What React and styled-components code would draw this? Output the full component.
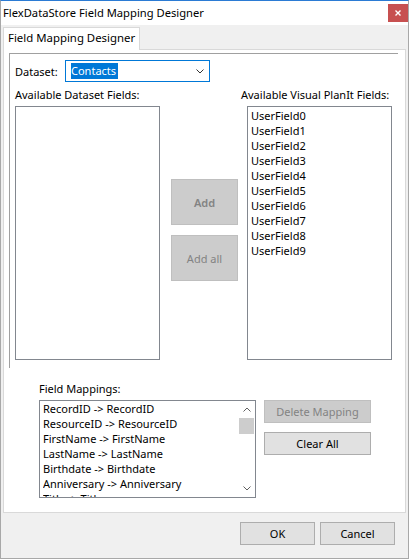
import React from 'react';
import styled, { createGlobalStyle } from 'styled-components';

const GlobalStyle = createGlobalStyle`
  html, body {
    margin: 0;
    padding: 0;
    background: #f0f0f0;
  }
  body {
    font-family: "Noto Sans", "Open Sans", sans-serif;
    font-size: 11px;
    color: #000;
  }
`;

const Window = styled.div`
  width: 409px;
  height: 559px;
  box-sizing: border-box;
  display: flex;
  flex-direction: column;
  background: #f0f0f0;
  border: 1px solid #a8a8a8;
  border-top-color: #2b7bd4;
`;

const TitleBar = styled.div`
  height: 24px;
  display: flex;
  align-items: flex-start;
  background: #fff;
  padding-left: 2px;
`;

const Title = styled.span`
  line-height: 24px;
  font-size: 11.2px;
`;

const CloseButton = styled.div`
  margin-left: auto;
  margin-top: 3px;
  width: 20px;
  height: 18px;
  background: #c75050;
  display: flex;
  align-items: center;
  justify-content: center;
`;

const Body = styled.div`
  flex: 1;
  display: flex;
  flex-direction: column;
  padding: 0 2px;
`;

const TabStrip = styled.div`
  height: 24px;
  display: flex;
  align-items: flex-end;
`;

const Tab = styled.div`
  position: relative;
  z-index: 1;
  width: 137px;
  height: 23px;
  box-sizing: border-box;
  margin-bottom: -1px;
  background: #fff;
  border: 1px solid #d9d9d9;
  border-bottom: none;
  padding-left: 4px;
  line-height: 20px;
  font-size: 11.4px;
`;

const TabPage = styled.div`
  flex: 1;
  background: #fff;
  border: 1px solid #d9d9d9;
  display: flex;
  flex-direction: column;
`;

const Panel = styled.div`
  height: 315px;
  box-sizing: border-box;
  margin: 3px 7px 0 5px;
  border-top: 1px solid #a0a0a0;
  border-left: 1px solid #a0a0a0;
  padding: 6px 5px 0 5px;
`;

const DatasetRow = styled.div`
  display: flex;
  align-items: center;
  height: 22px;
`;

const Label = styled.span`
  display: block;
  line-height: 15px;
  width: ${p => (p.width ? `${p.width}px` : 'auto')};
  white-space: nowrap;
`;

const Combo = styled.div`
  width: 145px;
  height: 22px;
  box-sizing: border-box;
  border: 1px solid #0078d7;
  display: flex;
  align-items: center;
  padding: 0 5px 0 5px;
`;

const Selected = styled.span`
  background: #0078d7;
  color: #fff;
  line-height: 16px;
  padding: 0 2px 0 0;
`;

const Chevron = styled.svg`
  margin-left: auto;
`;

const LabelsRow = styled.div`
  display: flex;
  margin-top: 5px;
`;

const ListsRow = styled.div`
  display: flex;
  align-items: flex-start;
  margin-top: 4px;
`;

const ListBox = styled.div`
  width: ${p => p.width}px;
  height: ${p => p.height}px;
  box-sizing: border-box;
  border: 1px solid #82878f;
  background: #fff;
  padding: ${p => p.padTop || 0}px 0 0 3px;
  overflow: hidden;
  display: flex;
  flex-direction: column;
`;

const Item = styled.div`
  line-height: 15px;
  white-space: nowrap;
`;

const AddColumn = styled.div`
  display: flex;
  flex-direction: column;
  gap: 10px;
  padding-top: 73px;
  margin: 0 9px 0 11px;
`;

const Button = styled.div`
  width: ${p => p.width}px;
  height: ${p => p.height}px;
  box-sizing: border-box;
  display: flex;
  align-items: center;
  justify-content: center;
  background: ${p => (p.disabled ? '#cccccc' : '#e1e1e1')};
  border: 1px solid ${p => (p.disabled ? '#bfbfbf' : '#adadad')};
  color: ${p => (p.disabled ? '#838383' : '#000')};
  font-weight: ${p => (p.strong ? 600 : 400)};
`;

const MappingSection = styled.div`
  padding: 13px 0 0 35px;
`;

const MappingRow = styled.div`
  display: flex;
  align-items: flex-start;
  margin-top: 4px;
`;

const MappingInner = styled.div`
  display: flex;
  height: 100%;
`;

const ItemsCol = styled.div`
  flex: 1;
  overflow: hidden;
`;

const ScrollBar = styled.div`
  width: 17px;
  align-self: stretch;
  background: #fff;
  display: flex;
  flex-direction: column;
  align-items: center;
`;

const ScrollArrow = styled.div`
  height: 17px;
  width: 17px;
  display: flex;
  align-items: center;
  justify-content: center;
  margin-top: ${p => (p.bottom ? 'auto' : '0')};
`;

const Thumb = styled.div`
  width: 15px;
  height: 16px;
  background: #cdcdcd;
`;

const MappingButtons = styled.div`
  display: flex;
  flex-direction: column;
  gap: 9px;
  margin-left: 8px;
`;

const Footer = styled.div`
  height: 45px;
  display: flex;
  justify-content: flex-end;
  gap: 5px;
  padding: 9px 13px 0 0;
  box-sizing: border-box;
`;

const userFields = Array.from({ length: 10 }, (_, i) => `UserField${i}`);

const mappings = [
  'RecordID -> RecordID',
  'ResourceID -> ResourceID',
  'FirstName -> FirstName',
  'LastName -> LastName',
  'Birthdate -> Birthdate',
  'Anniversary -> Anniversary',
  'Title -> Title',
];

const Arrow = ({ up }) => (
  <svg width="8" height="5" viewBox="0 0 8 5">
    <path
      d={up ? 'M0.5 4.5 L4 1 L7.5 4.5' : 'M0.5 0.5 L4 4 L7.5 0.5'}
      fill="none"
      stroke="#606060"
      strokeWidth="1"
    />
  </svg>
);

const App = () => {
  return (
    <>
      <GlobalStyle />
      <Window>
        <TitleBar>
          <Title>FlexDataStore Field Mapping Designer</Title>
          <CloseButton>
            <svg width="6" height="6" viewBox="0 0 6 6">
              <path d="M0.5 0.5 L5.5 5.5 M5.5 0.5 L0.5 5.5" stroke="#fff" strokeWidth="1.4" />
            </svg>
          </CloseButton>
        </TitleBar>
        <Body>
          <TabStrip>
            <Tab>Field Mapping Designer</Tab>
          </TabStrip>
          <TabPage>
            <Panel>
              <DatasetRow>
                <Label width={50}>Dataset:</Label>
                <Combo>
                  <Selected>Contacts</Selected>
                  <Chevron width="8" height="5" viewBox="0 0 8 5">
                    <path d="M0.5 0.5 L4 4 L7.5 0.5" fill="none" stroke="#333" strokeWidth="1" />
                  </Chevron>
                </Combo>
              </DatasetRow>
              <LabelsRow>
                <Label width={226}>Available Dataset Fields:</Label>
                <Label>Available Visual PlanIt Fields:</Label>
              </LabelsRow>
              <ListsRow>
                <ListBox width={145} height={254} />
                <AddColumn>
                  <Button width={67} height={46} disabled strong>Add</Button>
                  <Button width={67} height={46} disabled>Add all</Button>
                </AddColumn>
                <ListBox width={145} height={254} padTop={1}>
                  {userFields.map(f => (
                    <Item key={f}>{f}</Item>
                  ))}
                </ListBox>
              </ListsRow>
            </Panel>
            <MappingSection>
              <Label>Field Mappings:</Label>
              <MappingRow>
                <ListBox width={217} height={98}>
                  <MappingInner>
                    <ItemsCol>
                      {mappings.map(m => (
                        <Item key={m}>{m}</Item>
                      ))}
                    </ItemsCol>
                    <ScrollBar>
                      <ScrollArrow>
                        <Arrow up />
                      </ScrollArrow>
                      <Thumb />
                      <ScrollArrow bottom>
                        <Arrow />
                      </ScrollArrow>
                    </ScrollBar>
                  </MappingInner>
                </ListBox>
                <MappingButtons>
                  <Button width={107} height={23} disabled>Delete Mapping</Button>
                  <Button width={107} height={23}>Clear All</Button>
                </MappingButtons>
              </MappingRow>
            </MappingSection>
          </TabPage>
        </Body>
        <Footer>
          <Button width={75} height={23}>OK</Button>
          <Button width={75} height={23}>Cancel</Button>
        </Footer>
      </Window>
    </>
  );
};

export default App;
